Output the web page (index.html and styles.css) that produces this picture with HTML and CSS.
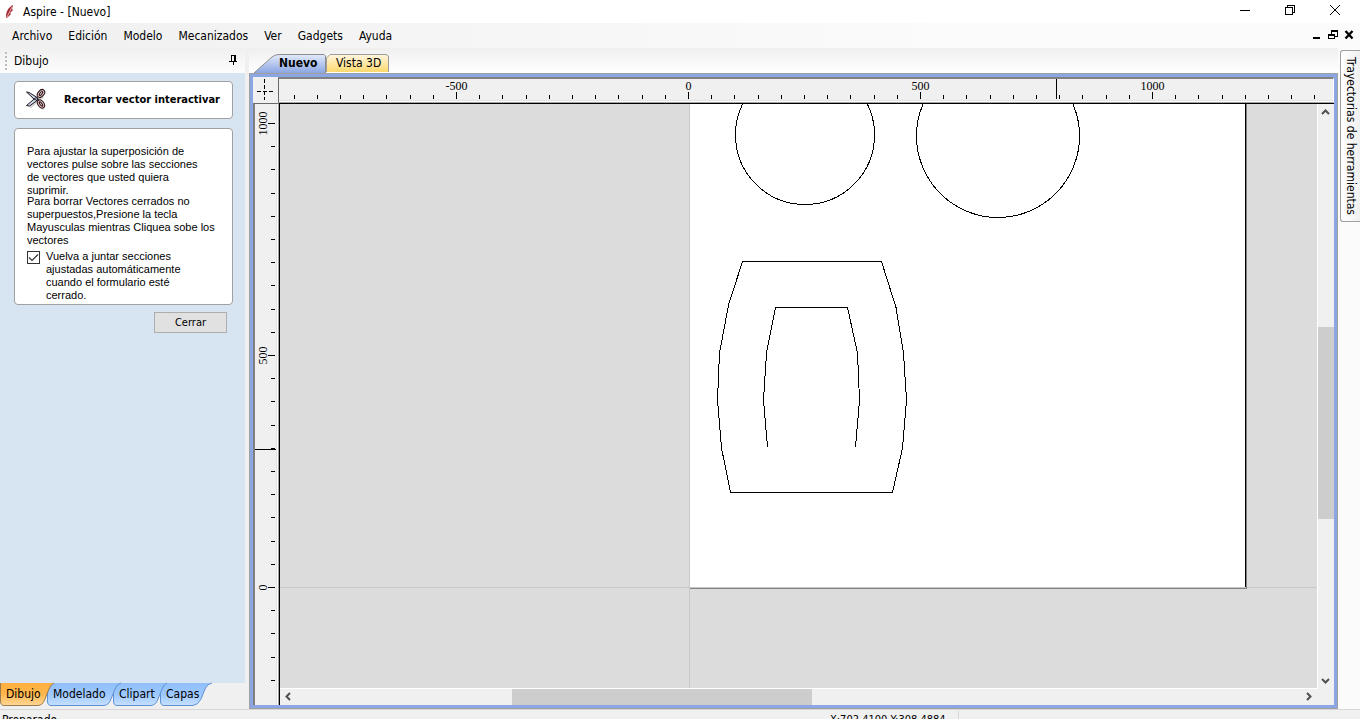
FILE: index.html
```html
<!DOCTYPE html>
<html lang="es">
<head>
<meta charset="utf-8">
<title>Aspire - [Nuevo]</title>
<link rel="stylesheet" href="styles.css">
</head>
<body>
<header class="titlebar">
  <svg class="app-icon" width="12" height="16" viewBox="0 0 12 16"><path d="M9 1C5 3 2 7 2 13L3 14 7 10 6 9 9 6 8 5Z" fill="#a3262f"/><path d="M8 3 3 13" stroke="#e6b4b6" stroke-width="1"/></svg>
  <h1 class="app-title">Aspire - [Nuevo]</h1>
  <div class="window-buttons">
    <button class="win-btn" aria-label="Minimizar"><svg width="12" height="12"><path d="M1 6.500H11" /></svg></button>
    <button class="win-btn" aria-label="Restaurar"><svg width="12" height="12"><path d="M1.500 3.500H8.500V10.500H1.500ZM3.500 3V1.500H10.500V8.500H9"/></svg></button>
    <button class="win-btn" aria-label="Cerrar ventana"><svg width="12" height="12"><path class="smooth" d="M1 1 11 11M11 1 1 11"/></svg></button>
  </div>
</header>
<nav class="menubar">
  <button class="menu">Archivo</button>
  <button class="menu">Edición</button>
  <button class="menu">Modelo</button>
  <button class="menu">Mecanizados</button>
  <button class="menu">Ver</button>
  <button class="menu">Gadgets</button>
  <button class="menu">Ayuda</button>
  <div class="doc-buttons">
    <button class="doc-btn" aria-label="Minimizar documento"><svg width="10" height="10"><path d="M1 8H8" stroke-width="2"/></svg></button>
    <button class="doc-btn" aria-label="Restaurar documento"><svg width="10" height="10"><path d="M0 5H7M3 1H10" stroke-width="2"/><path d="M.5 4V8.500H6.500V4M3.500 1V4M9.500 0V6.500H7"/></svg></button>
    <button class="doc-btn" aria-label="Cerrar documento"><svg width="10" height="10"><path class="smooth" d="M1.500 1 8.500 8.500M8.500 1 1.500 8.500" stroke-width="2.400"/></svg></button>
  </div>
</nav>
<main class="workspace">
  <aside class="side">
    <div class="side-head">
      <span class="grip"></span>
      <h2 class="side-title">Dibujo</h2>
      <button class="pin" aria-label="Fijar panel"><svg width="9" height="10"><path d="M2 0.500H7M2.500 0V6M0 6.500H8M4.500 6V10"/><path d="M6 0V6" stroke-width="2"/></svg></button>
    </div>
    <div class="side-body">
      <section class="card tool-card">
        <svg class="scissors" width="26" height="26" viewBox="0 0 26 26">
          <path d="M6 20 19 9M8 9 20 22" stroke="#d4d4d4" stroke-width="3"/>
          <path d="M2.500 5 5 5.500 14 11 13 13.500 10 12ZM2.500 18.500 12 10.500 14.500 12.500 5.500 19Z" fill="#cdd6e8" stroke="#1c1c26"/>
          <g fill="none" stroke="#2a1518" stroke-width="3"><ellipse cx="17" cy="6.500" rx="2" ry="3.500" transform="rotate(40 17 6.500)"/><ellipse cx="17" cy="17" rx="2" ry="3.500" transform="rotate(-35 17 17)"/></g>
          <g fill="none" stroke="#e2bcbc" stroke-width="1"><ellipse cx="17" cy="6.500" rx="2" ry="3.500" transform="rotate(40 17 6.500)"/><ellipse cx="17" cy="17" rx="2" ry="3.500" transform="rotate(-35 17 17)"/></g>
        </svg>
        <h3 class="tool-name">Recortar vector interactivar</h3>
      </section>
      <section class="card form-card">
        <p class="hint">Para ajustar la superposición de<br>vectores pulse sobre las secciones<br>de vectores que usted quiera<br>suprimir.</p>
        <p class="hint">Para borrar Vectores cerrados no<br>superpuestos,Presione la tecla<br>Mayusculas mientras Cliquea sobe los<br>vectores</p>
        <div class="check-row">
          <span class="check-box"><input class="check" id="rejoin" type="checkbox" checked><svg class="tick" width="13" height="13"><path d="M2 6.500 5 9.500 11 3.500"/></svg></span>
          <label for="rejoin">Vuelva a juntar secciones<br>ajustadas automáticamente<br>cuando el formulario esté<br>cerrado.</label>
        </div>
      </section>
      <button class="close">Cerrar</button>
    </div>
    <div class="side-tabs">
      <svg width="0" height="0" class="defs"><defs>
        <linearGradient id="orange" x2="0" y2="1"><stop offset="0" stop-color="#fdb040"/><stop offset=".45" stop-color="#ffb54a"/><stop offset="1" stop-color="#ffd695"/></linearGradient>
        <linearGradient id="sky" x2="0" y2="1"><stop offset="0" stop-color="#8fbffa"/><stop offset=".5" stop-color="#9dc8ff"/><stop offset="1" stop-color="#c6e0ff"/></linearGradient>
        <linearGradient id="blue" x2="0" y2="1"><stop offset="0" stop-color="#e3eafa"/><stop offset="1" stop-color="#8ba6e3"/></linearGradient>
        <linearGradient id="yellow" x2="0" y2="1"><stop offset="0" stop-color="#fff6e0"/><stop offset="1" stop-color="#ffd96e"/></linearGradient>
      </defs></svg>
      <button class="side-tab first"><svg class="shape" width="54" height="24"><path d="M.5 0V18Q.5 22.500 4 22.500H38Q43 22 45 16L49 6Q51 1 54 0" fill="url(#orange)" stroke="#9c7b4d"/></svg><span>Dibujo</span></button>
      <button class="side-tab second"><svg class="shape" width="74" height="24"><path d="M.5 0V18Q.5 22.500 4 22.500H57Q62 22 64 16L68 6Q70 1 74 0" fill="url(#sky)" stroke="#5f92d2"/></svg><span>Modelado</span></button>
      <button class="side-tab third"><svg class="shape" width="54" height="24"><path d="M.5 0V18Q.5 22.500 4 22.500H38Q43 22 45 16L49 6Q51 1 54 0" fill="url(#sky)" stroke="#5f92d2"/></svg><span>Clipart</span></button>
      <button class="side-tab"><svg class="shape" width="54" height="24"><path d="M.5 0V18Q.5 22.500 4 22.500H33Q38 22 41 16L45 6Q47 1 52 0" fill="url(#sky)" stroke="#5f92d2"/></svg><span>Capas</span></button>
    </div>
  </aside>
  <section class="document">
    <div class="view-tabs">
      <button class="view-tab current"><svg class="shape" width="76" height="20"><path d="M0 20 18 4Q21 1.500 25 1.500H70L71.500 3V20" fill="url(#blue)" stroke="#8c8c8c"/></svg><span>Nuevo</span></button>
      <button class="view-tab"><svg class="shape" width="63" height="20"><path d="M.5 19V5L4 1.500H60L62.500 3V19" fill="url(#yellow)" stroke="#9c9c9c"/></svg><span>Vista 3D</span></button>
    </div>
    <div class="frame">
      <div class="corner"><svg width="25" height="25"><path d="M11.500 2V23M4 14.500H20" stroke="#000" stroke-dasharray="4 2" shape-rendering="crispEdges"/></svg></div>
      <div class="ruler-x"><svg class="fill" id="rulerX"></svg></div>
      <div class="ruler-y"><svg class="fill" id="rulerY"></svg></div>
      <div class="view">
        <svg class="canvas" role="img" aria-label="Área de dibujo">
          <path d="M409.500 0V584M0 483.500H1037" stroke="#c8c8c8"/>
          <rect x="410" y="0" width="555" height="483" fill="#fff"/>
          <path d="M965.500 0V483" stroke="#000"/>
          <path d="M966.500 0V484M410 484.500H967" stroke="#828282"/>
          <g fill="none" stroke="#000">
            <circle cx="525" cy="31" r="69.500"/>
            <circle cx="718" cy="32" r="81.500"/>
            <path d="M462.500 157.500H601.500L616 203.500 623.500 249 626.500 296 622.500 344 612.500 388.500H450.500L441.500 344 437.500 296 439.500 249 448.500 201Z"/>
            <path d="M487.500 343 483.500 296 486.500 249 495.500 203.500H567.500L577.500 249 579.500 296 575.500 343"/>
          </g>
        </svg>
        <div class="vscroll">
          <button class="arrow" aria-label="Subir"><svg width="9" height="9"><path d="M1 6 4.500 2.500 8 6"/></svg></button>
          <div class="track-v"><div class="thumb"></div></div>
          <button class="arrow" aria-label="Bajar"><svg width="9" height="9"><path d="M1 3 4.500 6.500 8 3"/></svg></button>
        </div>
        <div class="hscroll">
          <button class="arrow" aria-label="Izquierda"><svg width="9" height="9"><path d="M6 1 2.500 4.500 6 8"/></svg></button>
          <div class="track-h"><div class="thumb"></div></div>
          <button class="arrow" aria-label="Derecha"><svg width="9" height="9"><path d="M3 1 6.500 4.500 3 8"/></svg></button>
        </div>
      </div>
    </div>
  </section>
  <aside class="dock"><button class="dock-tab">Trayectorias de herramientas</button></aside>
</main>
<footer class="statusbar">
  <span class="status">Preparado</span>
  <span class="coords">X:702.4100 Y:308.4884</span>
</footer>
<script src="rulers.js"></script>
</body>
</html>
```
FILE: styles.css
```css
* { box-sizing: border-box; }
body {
  margin: 0;
  height: 100vh;
  display: flex;
  flex-direction: column;
  overflow: hidden;
  background: #f0f0f0;
  color: #000;
  font: 12px/16px "DejaVu Sans Condensed", "Noto Sans", sans-serif;
}
button { margin: 0; padding: 0; border: 0; background: none; font: inherit; color: inherit; }
h1, h2, h3, p { margin: 0; font-size: inherit; font-weight: normal; }
svg { display: block; }

.titlebar { flex: none; height: 23px; display: flex; align-items: center; padding-left: 4px; background: #fff; }
.app-title { margin-left: 7px; }
.window-buttons { margin-left: auto; display: flex; margin-bottom: 3px; padding-right: 3px; }
.win-btn { width: 45px; display: grid; place-items: center; }
.window-buttons path { fill: none; stroke: #000; shape-rendering: crispEdges; }
.window-buttons .smooth, .doc-buttons .smooth { shape-rendering: auto; }

.menubar { flex: none; height: 25px; display: flex; align-items: center; gap: 16px; padding-left: 12px; background: linear-gradient(90deg, #f0f0f0, #fbfbfb 70%); }
.doc-buttons { margin-left: auto; display: flex; gap: 6px; padding: 0 6px 2px 0; }
.doc-buttons path { fill: none; stroke: #000; shape-rendering: crispEdges; }

.workspace { flex: 1; min-height: 0; display: flex; }

.side { flex: none; width: 245px; display: flex; flex-direction: column; }
.side-head { height: 25px; display: flex; align-items: center; padding: 0 7px 0 5px; background: linear-gradient(#f0f0f0, #fdfdfd); }
.grip { width: 2px; height: 18px; background: repeating-linear-gradient(#bdbdbd 0 2px, transparent 2px 4px); }
.side-title { margin-left: 7px; }
.pin { margin: 0 0 2px auto; }
.pin path { stroke: #000; shape-rendering: crispEdges; }
.side-body { flex: 1; min-height: 0; padding: 8px 12px 0 14px; background: #d7e4f2; font-size: 11px; line-height: 13px; }
.card { background: #fff; border: 1px solid #a0a0a0; border-radius: 4px; }
.tool-card { height: 38px; display: flex; align-items: center; padding: 0 0 0 9px; }
.scissors { flex: none; }
.tool-name { margin-left: 14px; white-space: nowrap; font-weight: bold; font-size: 11px; line-height: 16px; }
.form-card { margin-top: 9px; padding: 16px 12px 2px; height: 177px; white-space: nowrap; font-family: "Liberation Sans", Arial, sans-serif; }
.hint { height: 50px; overflow: hidden; }
.check-row { display: flex; gap: 6px; padding-top: 5px; }
.check-box { position: relative; width: 13px; height: 13px; margin-top: 1px; }
.check { appearance: none; display: block; width: 13px; height: 13px; margin: 0; border: 1px solid #333; background: #fff; }
.tick { position: absolute; inset: 0; display: none; pointer-events: none; }
.check:checked + .tick { display: block; }
.tick path { fill: none; stroke: #333; stroke-width: 1.2; }
.close { display: block; width: 73px; height: 21px; margin: 7px 6px 0 auto; background: #e1e1e1; border: 1px solid #adadad; }
.side-tabs { flex: none; height: 26px; display: flex; align-items: flex-start; }
.defs { position: absolute; }
.side-tab, .view-tab { position: relative; text-align: left; }
.side-tab { height: 22px; width: 60px; padding-left: 6px; }
.side-tab.first { width: 47px; z-index: 3; }
.side-tab.second { width: 66px; z-index: 2; }
.side-tab.third { width: 47px; z-index: 1; }
.shape { position: absolute; left: 0; top: 0; overflow: visible; }
.side-tab span, .view-tab span { position: relative; }

.document { flex: 1; min-width: 0; margin-left: 4px; display: flex; flex-direction: column; }
.view-tabs { flex: none; height: 25px; display: flex; align-items: flex-end; padding-left: 5px; background: linear-gradient(#efefef, #fff); }
.view-tab { height: 20px; width: 63px; padding-left: 10px; }
.view-tab.current { width: 72px; padding-left: 25px; font-weight: bold; }
.frame {
  flex: 1;
  min-height: 0;
  display: grid;
  grid-template: 26px minmax(0, 1fr) / 26px minmax(0, 1fr);
  border: 1px solid #a0a0a0;
  padding: 3px;
  background: #8ba6e3;
}
.corner { background: #f0f0f0; }
.ruler-x, .ruler-y { background: #f0f0f0; border-style: solid; }
.ruler-x { margin-left: -1px; border-width: 2px 1px 1px; border-color: #808080 #fff #a0a0a0 #696969; box-shadow: inset 0 -1px #fff, inset 0 -2px #e3e3e3; }
.ruler-y { border-width: 1px 1px 0 2px; border-color: #696969 #a0a0a0 #fff #808080; box-shadow: inset -1px 0 #fff, inset -2px 0 #e3e3e3; }
.fill { width: 100%; height: 100%; }
.fill path { stroke: #000; shape-rendering: crispEdges; }
.fill text { font: 12px "Liberation Serif", serif; text-anchor: middle; }
.view { display: grid; grid-template: minmax(0, 1fr) 16px / minmax(0, 1fr) 16px; border: solid #000; border-width: 1px 0 0 1px; background: #f0f0f0; }
.canvas { width: 100%; height: 100%; background: #dcdcdc; border: solid #fff; border-width: 0 1px 1px 0; shape-rendering: crispEdges; overflow: hidden; }
.vscroll { display: flex; flex-direction: column; }
.hscroll { display: flex; padding-right: 2px; }
.arrow { flex: none; width: 15px; height: 17px; display: grid; place-items: center; }
.hscroll .arrow { width: 16px; height: 15px; }
.arrow path { fill: none; stroke: #505050; stroke-width: 2; }
.track-v { flex: 1; display: grid; grid-template-rows: 206fr 192fr 153fr; }
.track-h { flex: 1; display: grid; grid-template-columns: 216fr 299fr 488fr; }
.thumb { background: #cdcdcd; }
.track-v .thumb { grid-row: 2; }
.track-h .thumb { grid-column: 2; }

.dock { flex: none; width: 22px; padding: 2px 0 0 2px; background: #fbfbfb; }
.dock-tab { display: block; width: 20px; height: 172px; writing-mode: vertical-rl; border: 1px solid #a0a0a0; border-right: 0; border-radius: 3px 0 0 3px; background: linear-gradient(90deg, #fff, #f0f0f0); white-space: nowrap; }

.statusbar { flex: none; height: 10px; display: flex; border-top: 1px solid #d7d7d7; padding-left: 2px; line-height: 20px; white-space: nowrap; overflow: hidden; }
.status { width: 828px; }
.coords { width: 129px; height: 18px; margin-top: 1px; border-right: 1px solid #d7d7d7; font-size: 11px; line-height: 18px; }
```
FILE: rulers.js
```js
// Draws the tick marks: 50 mm per tick, a label every 500 mm.
var STEP = 23.2;
var NS = "http://www.w3.org/2000/svg";

function add(svg, name, attrs, text) {
  var node = document.createElementNS(NS, name);
  for (var key in attrs) node.setAttribute(key, attrs[key]);
  if (text) node.textContent = text;
  svg.appendChild(node);
}

function drawX(svg, origin, cursor) {
  for (var k = -17; origin + k * STEP < svg.clientWidth; k++) {
    var x = Math.round(origin + k * STEP) + 0.5;
    var major = k % 10 === 0;
    add(svg, "path", { d: "M" + x + " " + (major ? 13 : 16) + "V20" });
    if (major) add(svg, "text", { x: x, y: 11 }, String(k * 50));
  }
  add(svg, "path", { d: "M" + cursor + " 0V20" });
}

function drawY(svg, origin, cursor) {
  for (var k = -4; k <= 20; k++) {
    var y = Math.round(origin - k * STEP) + 0.5;
    var major = k % 10 === 0;
    add(svg, "path", { d: "M" + (major ? 13 : 16) + " " + y + "H20" });
    if (major) add(svg, "text", { transform: "translate(12 " + y + ") rotate(-90)" }, String(k * 50));
  }
  add(svg, "path", { d: "M0 " + cursor + "H21" });
}

drawX(document.getElementById("rulerX"), 409, 777.5);
drawY(document.getElementById("rulerY"), 483, 345.5);
```
